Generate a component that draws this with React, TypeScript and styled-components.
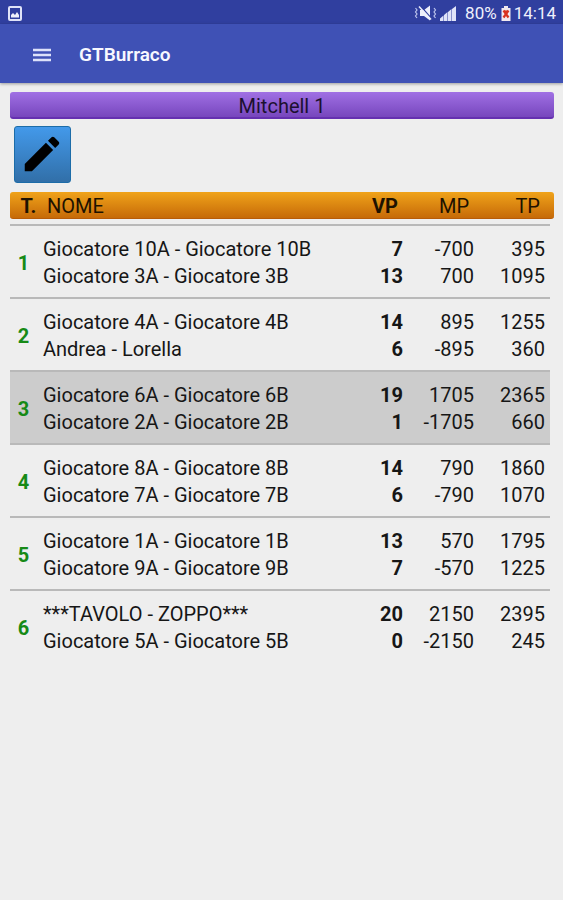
import React from 'react';
import styled, { createGlobalStyle } from 'styled-components';

const GlobalStyle = createGlobalStyle`
  *, *::before, *::after { box-sizing: border-box; }
  body {
    margin: 0;
    min-height: 100vh;
    background: #eeeeee;
    color: #161616;
    font-family: Roboto, "Liberation Sans", sans-serif;
    font-size: 20px;
    line-height: 27px;
  }
`;

const StatusBar = styled.div`
  display: flex;
  align-items: center;
  justify-content: space-between;
  height: 24px;
  padding: 2px 7px 0 8px;
  background: #303f9f;
  color: #eef0fb;
  font-size: 17px;
  line-height: 22px;
  svg { display: block; }
`;

const StatusGroup = styled.div`
  display: flex;
  align-items: center;
`;

const StatusText = styled.span<{ $before: number }>`
  margin-left: ${({ $before }) => $before}px;
`;

const AppBar = styled.header`
  display: flex;
  align-items: center;
  gap: 27px;
  height: 59px;
  padding: 2px 32px 0;
  background: #3f51b5;
  box-shadow: 0 1px 3px rgba(0, 0, 0, 0.35);
`;

const MenuButton = styled.button`
  display: flex;
  width: 20px;
  height: 24px;
  align-items: center;
  padding: 0;
  border: 0;
  background: none;
  cursor: pointer;
`;

const Title = styled.h1`
  margin: 0;
  color: #f7f8ff;
  font-size: 19px;
  font-weight: 600;
  line-height: 24px;
`;

const Content = styled.main`
  padding: 9px 9px 24px 10px;
`;

const RoundHeading = styled.h2`
  margin: 0;
  height: 27px;
  padding-top: 1px;
  border-bottom: 2px solid #6530b0;
  border-radius: 3px;
  background: linear-gradient(#a070e4, #7746bd);
  color: #1c1030;
  font-size: 20px;
  font-weight: 400;
  line-height: 27px;
  text-align: center;
`;

const EditButton = styled.button`
  display: flex;
  align-items: center;
  justify-content: center;
  width: 57px;
  height: 57px;
  margin: 7px 4px 9px;
  padding: 0 1px 1px 0;
  border: 1px solid #1c6ca8;
  border-radius: 3px;
  background: linear-gradient(#4399ea, #316fa8);
  cursor: pointer;
`;

const Standings = styled.table`
  display: block;
  width: 100%;
`;

const HeadGroup = styled.thead`
  display: block;
  margin-bottom: 5px;
  border-bottom: 1px solid #b85c08;
  border-radius: 3px;
  background: linear-gradient(#f0a31a, #c66a08);
`;

const HeadRow = styled.tr`
  display: grid;
  grid-template-columns: 37px 1fr 71px 71px 71px;
  height: 26px;
  padding: 1px 14px 0 0;
  color: #1e1200;
`;

const HeadCell = styled.th<{ $strong?: boolean; $align?: 'left' | 'right' | 'center' }>`
  padding: 0;
  font-weight: ${({ $strong }) => ($strong ? 700 : 400)};
  text-align: ${({ $align = 'right' }) => $align};
`;

const BodyGroup = styled.tbody`
  display: block;
  margin-right: 4px;
`;

const TableRow = styled.tr<{ $selected: boolean }>`
  display: grid;
  grid-template-columns: 33px 1fr 71px 71px 71px;
  padding: 10px 5px 7px 0;
  border-top: 2px solid #b9b9b9;
  background: ${({ $selected }) => ($selected ? '#cccccc' : 'transparent')};
`;

const TableNumber = styled.th`
  align-self: center;
  padding: 0 6px 0 0;
  color: #168a16;
  font-weight: 700;
  text-align: center;
`;

const Cell = styled.td<{ $strong?: boolean; $align?: 'left' | 'right' }>`
  padding: 0;
  font-weight: ${({ $strong }) => ($strong ? 700 : 400)};
  text-align: ${({ $align = 'right' }) => $align};
  white-space: nowrap;
`;

const Line = styled.span`
  display: block;
`;

interface Pair {
  name: string;
  vp: number;
  mp: number;
  tp: number;
}

const pair = (name: string, vp: number, mp: number, tp: number): Pair => ({ name, vp, mp, tp });

const tables: Pair[][] = [
  [pair('Giocatore 10A - Giocatore 10B', 7, -700, 395), pair('Giocatore 3A - Giocatore 3B', 13, 700, 1095)],
  [pair('Giocatore 4A - Giocatore 4B', 14, 895, 1255), pair('Andrea - Lorella', 6, -895, 360)],
  [pair('Giocatore 6A - Giocatore 6B', 19, 1705, 2365), pair('Giocatore 2A - Giocatore 2B', 1, -1705, 660)],
  [pair('Giocatore 8A - Giocatore 8B', 14, 790, 1860), pair('Giocatore 7A - Giocatore 7B', 6, -790, 1070)],
  [pair('Giocatore 1A - Giocatore 1B', 13, 570, 1795), pair('Giocatore 9A - Giocatore 9B', 7, -570, 1225)],
  [pair('***TAVOLO - ZOPPO***', 20, 2150, 2395), pair('Giocatore 5A - Giocatore 5B', 0, -2150, 245)],
];

const selectedTable = 3;

const PictureIcon = () => (
  <svg width="14" height="15" viewBox="0 0 14 15" aria-hidden="true">
    <rect x="1" y="1" width="12" height="13" rx="1" fill="none" stroke="#dfe3f8" strokeWidth="2" />
    <path d="M3 11.500V9l2-2 2 2 2-3 2 3v2.500z" fill="#eef0fb" />
  </svg>
);

const MutedIcon = () => (
  <svg width="23" height="16" viewBox="0 0 23 16" aria-hidden="true">
    <path d="M6 5h4l6-4.500v15L10 11H6z" fill="#eef0fb" />
    <path d="M6.500 1l11 12.500" stroke="#303f9f" strokeWidth="1.200" />
    <path d="M5 1.500l12 13" stroke="#eef0fb" strokeWidth="1.500" />
    <path d="M1.500 3l1.500 2-1.500 2L3 9l-1.500 2L3 13M20 3l1.500 2L20 7l1.500 2-1.500 2 1.500 2" fill="none" stroke="#bcc4ec" strokeWidth="1.200" />
  </svg>
);

const SignalIcon = () => (
  <svg width="17" height="15" viewBox="0 0 17 15" aria-hidden="true">
    <path d="M0 15v-2.500l3.500-3V15zM4 15V9l3.500-3v9zM8 15V6l3.500-3v12zM12 15V3l4-3v15z" fill="#dfe3f8" />
  </svg>
);

const BatteryIcon = () => (
  <svg width="10" height="15" viewBox="0 0 10 15" aria-hidden="true">
    <path d="M3 0h4v2h2.500v13h-9V2H3z" fill="#f1e9ee" />
    <path d="M2.500 4.500l5 7M7.500 4.500l-5 7" stroke="#d8321f" strokeWidth="2.200" />
    <circle cx="5" cy="6" r="1.800" fill="#d8321f" />
  </svg>
);

const MenuIcon = () => (
  <svg width="20" height="14" viewBox="0 0 20 14" aria-hidden="true">
    <path d="M1 2h18M1 7h18M1 12h18" stroke="#dde2fa" strokeWidth="2.400" />
  </svg>
);

const PencilIcon = () => (
  <svg width="46" height="46" viewBox="0 0 24 24" aria-hidden="true">
    <path
      d="M3 17.250V21h3.750L17.810 9.940l-3.750-3.750L3 17.250zM20.710 7.040a1 1 0 0 0 0-1.410l-2.340-2.340a1 1 0 0 0-1.410 0l-1.830 1.830 3.750 3.750 1.830-1.830z"
      fill="#000000"
    />
  </svg>
);

export default function App() {
  return (
    <>
      <GlobalStyle />
      <StatusBar>
        <PictureIcon />
        <StatusGroup>
          <MutedIcon />
          <StatusText $before={3}>
            <SignalIcon />
          </StatusText>
          <StatusText $before={8}>80%</StatusText>
          <StatusText $before={4}>
            <BatteryIcon />
          </StatusText>
          <StatusText $before={3}>14:14</StatusText>
        </StatusGroup>
      </StatusBar>
      <AppBar>
        <MenuButton type="button" aria-label="Menu">
          <MenuIcon />
        </MenuButton>
        <Title>GTBurraco</Title>
      </AppBar>
      <Content>
        <RoundHeading>Mitchell 1</RoundHeading>
        <EditButton type="button" aria-label="Modifica">
          <PencilIcon />
        </EditButton>
        <Standings>
          <HeadGroup>
            <HeadRow>
              <HeadCell scope="col" $strong $align="center">T.</HeadCell>
              <HeadCell scope="col" $align="left">NOME</HeadCell>
              <HeadCell scope="col" $strong>VP</HeadCell>
              <HeadCell scope="col">MP</HeadCell>
              <HeadCell scope="col">TP</HeadCell>
            </HeadRow>
          </HeadGroup>
          <BodyGroup>
            {tables.map((pairs, index) => (
              <TableRow key={index} $selected={index + 1 === selectedTable}>
                <TableNumber scope="row">{index + 1}</TableNumber>
                <Cell $align="left">{pairs.map((p) => <Line key={p.name}>{p.name}</Line>)}</Cell>
                <Cell $strong>{pairs.map((p) => <Line key={p.name}>{p.vp}</Line>)}</Cell>
                <Cell>{pairs.map((p) => <Line key={p.name}>{p.mp}</Line>)}</Cell>
                <Cell>{pairs.map((p) => <Line key={p.name}>{p.tp}</Line>)}</Cell>
              </TableRow>
            ))}
          </BodyGroup>
        </Standings>
      </Content>
    </>
  );
}
